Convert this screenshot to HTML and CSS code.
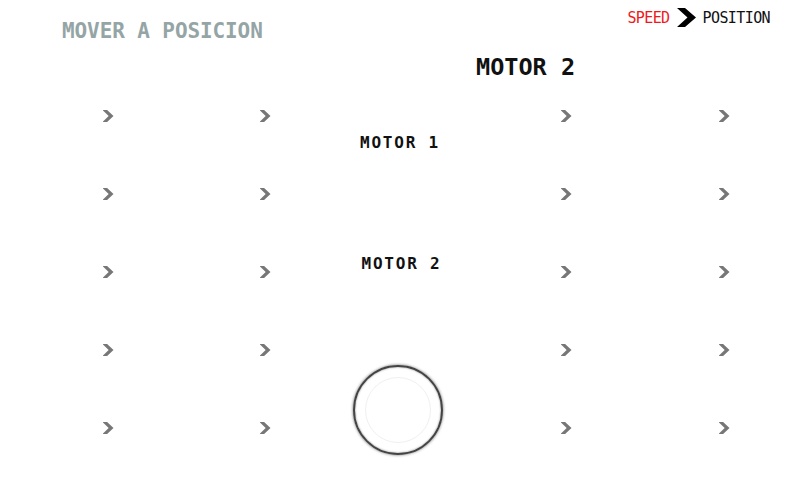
FILE: index.html
```html
<!DOCTYPE html>
<html lang="es">
<head>
<meta charset="utf-8">
<title>Mover a posicion</title>
<link rel="stylesheet" href="styles.css">
</head>
<body>
<div class="page">
  <header class="top">
    <h1 class="title">MOVER A POSICION</h1>
    <div class="mode">
      <span class="mode-speed">SPEED</span>
      <svg class="mode-arrow" width="21" height="21" viewBox="0 0 21 21"><polygon points="1,1 9,1 20,10.5 9,20 1,20 11.5,10.5" fill="#000"/></svg>
      <span class="mode-pos">POSITION</span>
    </div>
  </header>
  <div class="heading">MOTOR 2</div>
  <main class="grid">
    <div class="col">
      <span class="chev"></span><span class="chev"></span><span class="chev"></span><span class="chev"></span><span class="chev"></span>
    </div>
    <div class="col">
      <span class="chev"></span><span class="chev"></span><span class="chev"></span><span class="chev"></span><span class="chev"></span>
    </div>
    <div class="middle">
      <div class="label label-1">MOTOR 1</div>
      <div class="label label-2">MOTOR 2</div>
      <div class="knob"><div class="knob-inner"></div></div>
    </div>
    <div class="col">
      <span class="chev"></span><span class="chev"></span><span class="chev"></span><span class="chev"></span><span class="chev"></span>
    </div>
    <div class="col">
      <span class="chev"></span><span class="chev"></span><span class="chev"></span><span class="chev"></span><span class="chev"></span>
    </div>
  </main>
</div>
</body>
</html>
```
FILE: styles.css
```css
* { box-sizing: border-box; }
html, body { margin: 0; padding: 0; background: #fff; }
body { font-family: "DejaVu Sans Mono", "Liberation Mono", monospace; color: #111; }
.page { width: 800px; height: 480px; overflow: hidden; }

.top {
  height: 57px;
  display: flex;
  justify-content: space-between;
  align-items: flex-start;
}
.title {
  margin: 19px 0 0 62px;
  font-size: 21px;
  line-height: 25px;
  font-weight: bold;
  letter-spacing: -0.1px;
  color: #95a5a6;
}
.mode {
  margin: 7px 30px 0 0;
  display: flex;
  align-items: center;
  gap: 6px;
  font-size: 15px;
  line-height: 20px;
  letter-spacing: -0.6px;
}
.mode-speed { color: #f01818; }
.mode-pos { color: #111; }
.mode-arrow { display: block; }

.heading {
  height: 20px;
  line-height: 20px;
  padding-left: 476px;
  font-size: 23.5px;
  font-weight: bold;
  color: #111;
}

.grid {
  display: grid;
  grid-template-columns: 156px 158px 112px 220px 96px;
  padding-left: 30px;
  height: 390px;
}
.col {
  display: grid;
  grid-template-rows: repeat(5, 78px);
  justify-items: center;
  align-items: center;
}
.chev {
  width: 11px;
  height: 12px;
  background: #777;
  clip-path: polygon(0 0, 42% 0, 100% 50%, 42% 100%, 0 100%, 56% 50%);
}

.middle {
  display: flex;
  flex-direction: column;
  align-items: center;
}
.label {
  font-size: 16px;
  line-height: 20px;
  font-weight: bold;
  letter-spacing: 1.8px;
  color: #111;
}
.label-1 { margin-top: 56px; }
.label-2 { margin-top: 101px; padding-left: 3px; }
.knob {
  margin-top: 91px;
  margin-right: 4px;
  width: 90px;
  height: 90px;
  border-radius: 50%;
  border: 2px solid #444;
  box-shadow: 0 0 3px rgba(0, 0, 0, 0.6), inset 0 0 2px rgba(0, 0, 0, 0.45);
  display: flex;
  align-items: center;
  justify-content: center;
}
.knob-inner {
  width: 66px;
  height: 66px;
  border-radius: 50%;
  border: 1px solid #f0f0f0;
}
```
